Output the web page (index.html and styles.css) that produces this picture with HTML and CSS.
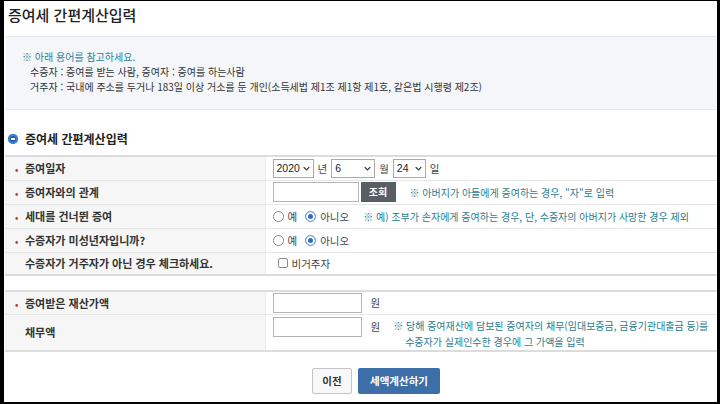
FILE: index.html
```html
<!DOCTYPE html>
<html lang="ko">
<head>
    <meta charset="UTF-8">
    <title>증여세 간편계산입력</title>
    <link rel="stylesheet" href="styles.css">
</head>
<body>
    <div class="frame">
        <h1 class="title">증여세 간편계산입력</h1>

        <div class="notice">
            <p class="notice-head">※ 아래 용어를 참고하세요.</p>
            <p>수증자 : 증여를 받는 사람, 증여자 : 증여를 하는사람</p>
            <p>거주자 : 국내에 주소를 두거나 183일 이상 거소를 둔 개인(소득세법 제1조 제1항 제1호, 같은법 시행령 제2조)</p>
        </div>

        <h2 class="section"><span class="bullet"></span>증여세 간편계산입력</h2>

        <table class="form">
            <tr class="r25">
                <th><span class="req">•</span>증여일자</th>
                <td>
                    <div class="field">
                        <span class="select w40">2020<svg class="chev" viewBox="0 0 10 6"><path d="M1 1l4 4 4-4"/></svg></span>
                        <span class="unit">년</span>
                        <span class="select w43">6<svg class="chev" viewBox="0 0 10 6"><path d="M1 1l4 4 4-4"/></svg></span>
                        <span class="unit">월</span>
                        <span class="select w32">24<svg class="chev" viewBox="0 0 10 6"><path d="M1 1l4 4 4-4"/></svg></span>
                        <span class="unit">일</span>
                    </div>
                </td>
            </tr>
            <tr class="r25">
                <th><span class="req">•</span>증여자와의 관계</th>
                <td>
                    <div class="field">
                        <span class="input w85"></span>
                        <span class="btn-lookup">조회</span>
                        <span class="note ml14">※ 아버지가 아들에게 증여하는 경우, "자"로 입력</span>
                    </div>
                </td>
            </tr>
            <tr class="r25">
                <th><span class="req">•</span>세대를 건너뛴 증여</th>
                <td>
                    <div class="field">
                        <span class="radio"></span><span class="opt">예</span>
                        <span class="radio on"></span><span class="opt">아니오</span>
                        <span class="note ml14">※ 예) 조부가 손자에게 증여하는 경우, 단, 수증자의 아버지가 사망한 경우 제외</span>
                    </div>
                </td>
            </tr>
            <tr class="r25">
                <th><span class="req">•</span>수증자가 미성년자입니까?</th>
                <td>
                    <div class="field">
                        <span class="radio"></span><span class="opt">예</span>
                        <span class="radio on"></span><span class="opt">아니오</span>
                    </div>
                </td>
            </tr>
            <tr class="r24">
                <th><span class="req blank"></span>수증자가 거주자가 아닌 경우 체크하세요.</th>
                <td>
                    <div class="field">
                        <span class="check"></span><span class="opt">비거주자</span>
                    </div>
                </td>
            </tr>
        </table>

        <table class="form second">
            <tr class="r24">
                <th><span class="req">•</span>증여받은 재산가액</th>
                <td>
                    <div class="field">
                        <span class="input w89"></span>
                        <span class="unit won">원</span>
                    </div>
                </td>
            </tr>
            <tr class="r36">
                <th><span class="req blank"></span>채무액</th>
                <td>
                    <div class="field top">
                        <span class="input w89"></span>
                        <span class="unit won">원</span>
                        <p class="note debt">※ 당해 증여재산에 담보된 증여자의 채무(임대보증금, 금융기관대출금 등)를<br>수증자가 실제인수한 경우에 그 가액을 입력</p>
                    </div>
                </td>
            </tr>
        </table>

        <div class="actions">
            <span class="btn btn-prev">이전</span>
            <span class="btn btn-calc">세액계산하기</span>
        </div>
    </div>
</body>
</html>
```

FILE: styles.css
```css
html, body {
    margin: 0;
    padding: 0;
    background-color: #000;
}
body {
    font-family: "Noto Sans CJK KR", "Noto Sans", sans-serif;
    color: #333;
}
.frame {
    margin: 1px 3px 2px 4px;
    height: 401px;
    background-color: #fff;
    box-sizing: border-box;
    overflow: hidden;
}
.title {
    margin: 4px 0 0 4px;
    font-size: 15px;
    line-height: 20px;
    font-weight: 500;
    color: #222;
}
.notice {
    margin: 11px 0 0 2px;
    height: 74px;
    box-sizing: border-box;
    padding: 12px 0 0 24px;
    background-color: #f4f6fa;
    border-top: 1px solid #e4e8f0;
    border-bottom: 1px solid #e4e8f0;
}
.notice p {
    margin: 0;
    font-size: 10px;
    line-height: 15px;
    color: #333;
}
.notice .notice-head {
    margin-left: -8px;
    color: #2f8296;
}
.section {
    display: flex;
    align-items: center;
    margin: 20px 0 7px 4px;
    font-size: 12px;
    line-height: 18px;
    font-weight: bold;
    color: #222;
}
.bullet {
    width: 10px;
    height: 10px;
    margin-right: 7px;
    border-radius: 50%;
    background-color: #1f5fa8;
    box-shadow: inset 0 0 0 2px #3f86d0;
    position: relative;
}
.bullet::after {
    content: "";
    position: absolute;
    left: 3px;
    top: 4px;
    width: 4px;
    height: 2px;
    background-color: #fff;
}
.form {
    width: 712px;
    margin-left: 1px;
    table-layout: fixed;
    border-collapse: collapse;
    border-top: 2px solid #dcdcdc;
    border-bottom: 2px solid #dcdcdc;
}
.form.second {
    margin-top: 14px;
}
.form th {
    width: 260px;
    padding: 0 0 0 10px;
    box-sizing: border-box;
    background-color: #f6f6f6;
    border-bottom: 1px solid #e6e6e6;
    border-right: 1px solid #ececec;
    text-align: left;
    font-size: 11px;
    font-weight: bold;
    color: #333;
    white-space: nowrap;
}
.form td {
    padding: 0 0 0 7px;
    border-bottom: 1px solid #e6e6e6;
}
.form tr:last-child th,
.form tr:last-child td {
    border-bottom: none;
}
.r25 { height: 24px; }
.r24 { height: 23px; }
.r36 { height: 35px; }
.req {
    display: inline-block;
    width: 10px;
    color: #c0392b;
    font-size: 9px;
}
.field {
    display: flex;
    align-items: center;
    font-size: 10.5px;
}
.field.top {
    align-items: flex-start;
    padding-top: 2px;
}
.select {
    display: flex;
    align-items: center;
    justify-content: space-between;
    height: 19px;
    box-sizing: border-box;
    padding: 0 3px 0 3px;
    border: 1px solid #a9a9a9;
    background-color: #fff;
    font-family: "Liberation Sans", sans-serif;
    font-size: 10.5px;
    color: #222;
}
.chev {
    width: 7px;
    height: 5px;
    fill: none;
    stroke: #333;
    stroke-width: 1.8;
}
.w40 { width: 41px; }
.w43 { width: 44px; }
.w32 { width: 33px; }
.w85 { width: 86px; }
.w89 { width: 89px; }
.unit {
    margin: 0 4px 0 4px;
    color: #444;
}
.unit.won {
    margin-left: 9px;
    line-height: 19px;
}
.input {
    height: 20px;
    box-sizing: border-box;
    border: 1px solid #b4b4b4;
    background-color: #fff;
}
.btn-lookup {
    width: 35px;
    height: 20px;
    margin-left: 2px;
    line-height: 20px;
    text-align: center;
    background-color: #595e65;
    color: #fff;
    font-weight: bold;
    font-size: 10px;
}
.note {
    color: #2a7c8e;
    font-size: 10px;
    white-space: nowrap;
}
.ml14 { margin-left: 14px; }
.note.debt {
    margin: 0 0 0 9px;
    line-height: 16px;
    padding-left: 12px;
    text-indent: -12px;
    margin-top: 1px;
}
.radio {
    width: 11px;
    height: 11px;
    box-sizing: border-box;
    border: 1px solid #8a8a8a;
    border-radius: 50%;
    background-color: #fff;
    margin-right: 4px;
}
.radio.on {
    border-color: #6b9bd2;
    background-color: #2c6cc4;
    box-shadow: inset 0 0 0 2px #fff;
    margin-left: 8px;
}
.opt {
    color: #444;
}
.check {
    width: 10px;
    height: 10px;
    margin: 0 4px 0 5px;
    box-sizing: border-box;
    border: 1px solid #8a8a8a;
    border-radius: 2px;
    background-color: #fff;
}
.actions {
    display: flex;
    justify-content: center;
    gap: 6px;
    margin-top: 16px;
    padding-left: 31px;
}
.btn {
    height: 26px;
    line-height: 26px;
    box-sizing: border-box;
    padding: 0 10px;
    font-size: 10.5px;
    font-weight: bold;
    border-radius: 2px;
}
.btn-prev {
    width: 40px;
    background-color: #f8f8f8;
    border: 1px solid #c4c4c4;
    line-height: 24px;
    color: #333;
    text-align: center;
    padding: 0;
}
.btn-calc {
    width: 82px;
    text-align: center;
    padding: 0;
    background-color: #3c6ea8;
    color: #fff;
}
```
